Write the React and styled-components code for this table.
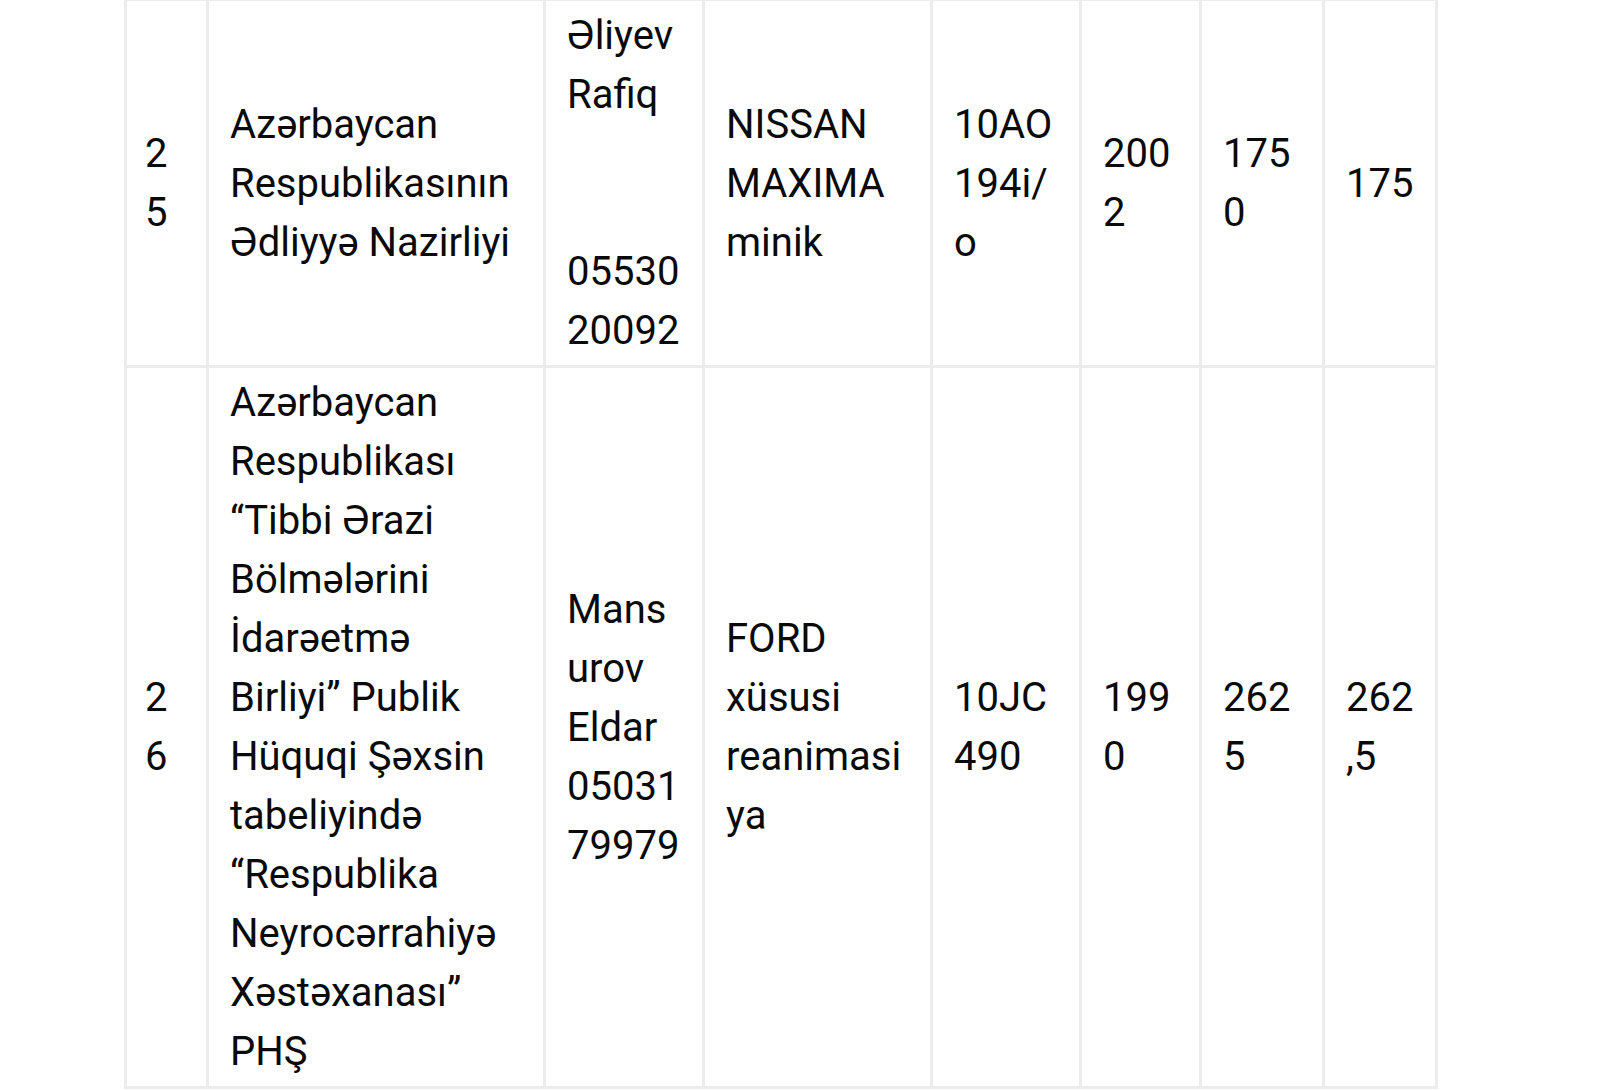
import React from "react";
import styled, { createGlobalStyle } from "styled-components";

const Global = createGlobalStyle`
  html, body { margin: 0; padding: 0; background: #ffffff; }
  body { font-family: Roboto, "Noto Sans", "Liberation Sans", sans-serif; color: #000; }
`;

const Page = styled.div`
  padding-left: 124px;
  margin-top: -2px;
`;

const Table = styled.table`
  border-collapse: collapse;
  table-layout: fixed;
  width: 1314px;
`;

const Col = styled.col`
  width: ${(p) => p.$w}px;
`;

const Cell = styled.td`
  border: 3px solid #ececec;
  padding: 5px 20px 5px ${(p) => (p.$pl != null ? p.$pl : 21)}px;
  vertical-align: middle;
  font-size: 40px;
  line-height: 59px;
  color: #0a0a0a;
  white-space: nowrap;
  overflow: hidden;
`;

const Line = styled.div`
  min-height: 59px;
`;

const widths = [82, 337, 159, 228, 149, 120, 123, 113];

const rows = [
  [
    ["2", "5"],
    ["Azərbaycan", "Respublikasının", "Ədliyyə Nazirliyi"],
    ["Əliyev", "Rafiq", "", "", "05530", "20092"],
    ["NISSAN", "MAXIMA", "minik"],
    ["10AO", "194i/", "o"],
    ["200", "2"],
    ["175", "0"],
    ["175"],
  ],
  [
    ["2", "6"],
    [
      "Azərbaycan",
      "Respublikası",
      "“Tibbi Ərazi",
      "Bölmələrini",
      "İdarəetmə",
      "Birliyi” Publik",
      "Hüquqi Şəxsin",
      "tabeliyində",
      "“Respublika",
      "Neyrocərrahiyə",
      "Xəstəxanası”",
      "PHŞ",
    ],
    ["Mans", "urov", "Eldar", "05031", "79979"],
    ["FORD", "xüsusi", "reanimasi", "ya"],
    ["10JC", "490"],
    ["199", "0"],
    ["262", "5"],
    ["262", ",5"],
  ],
];

export default function App() {
  return (
    <>
      <Global />
      <Page>
        <Table>
          <colgroup>
            {widths.map((w, i) => (
              <Col key={i} $w={w} />
            ))}
          </colgroup>
          <tbody>
            {rows.map((row, ri) => (
              <tr key={ri}>
                {row.map((lines, ci) => (
                  <Cell key={ci} $pl={ci === 0 ? 18 : 21}>
                    {lines.map((l, li) => (
                      <Line key={li}>{l}</Line>
                    ))}
                  </Cell>
                ))}
              </tr>
            ))}
          </tbody>
        </Table>
      </Page>
    </>
  );
}
